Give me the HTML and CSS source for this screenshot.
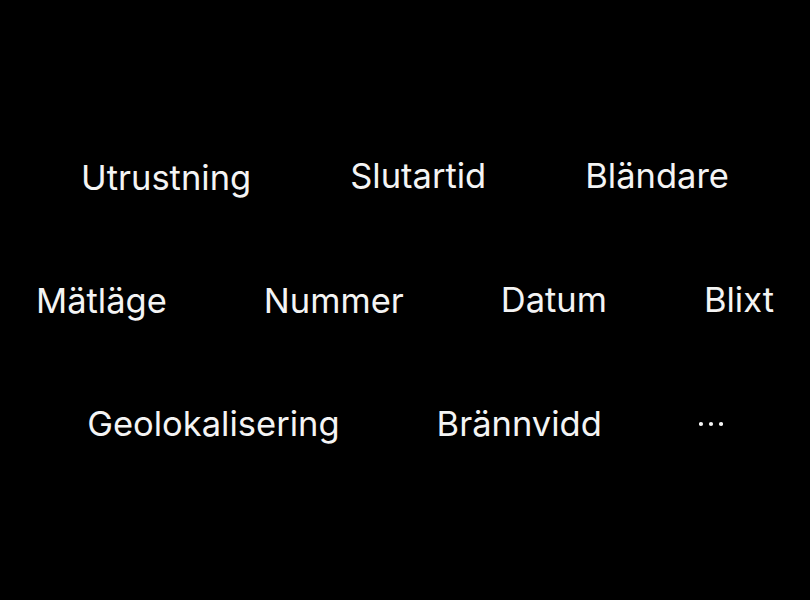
FILE: index.html
```html
<!DOCTYPE html>
<html lang="sv">
<head>
<meta charset="utf-8">
<link rel="stylesheet" href="styles.css">
</head>
<body>
<main class="cloud">
  <div class="row row-top">
    <span class="tag low2">Utrustning</span>
    <span class="tag">Slutartid</span>
    <span class="tag">Bländare</span>
  </div>
  <div class="row">
    <span class="tag low1">Mätläge</span>
    <span class="tag low1">Nummer</span>
    <span class="tag">Datum</span>
    <span class="tag">Blixt</span>
  </div>
  <div class="row">
    <span class="tag">Geolokalisering</span>
    <span class="tag">Brännvidd</span>
    <span class="more"><svg width="24" height="6" viewBox="0 0 24 6"><circle cx="2" cy="3" r="2.1"/><circle cx="12" cy="3" r="2.1"/><circle cx="22" cy="3" r="2.1"/></svg></span>
  </div>
</main>
</body>
</html>
```

FILE: styles.css
```css
html, body {
  margin: 0;
  padding: 0;
  background: #000;
}
.cloud {
  width: 810px;
  height: 600px;
  display: flex;
  flex-direction: column;
  justify-content: center;
  gap: 84px;
  font-family: Inter, "Noto Sans", sans-serif;
  color: #f4f4f4;
}
.row {
  display: flex;
  justify-content: center;
  align-items: flex-start;
  gap: 97px;
  height: 40px;
}
.row-top {
  gap: 99px;
}
.tag {
  font-size: 34.5px;
  line-height: 40px;
  white-space: nowrap;
}
.low1 {
  margin-top: 1px;
}
.low2 {
  margin-top: 2px;
}
.more {
  align-self: center;
  display: flex;
  align-items: center;
  height: 6px;
}
.more svg {
  fill: #f4f4f4;
  display: block;
}
```
